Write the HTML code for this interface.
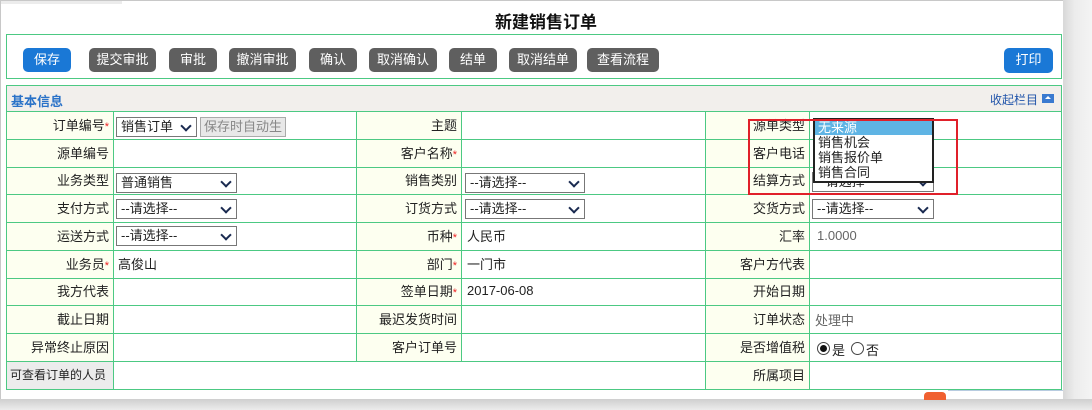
<!DOCTYPE html>
<html><head><meta charset="utf-8"><style>
*{box-sizing:border-box;margin:0;padding:0}
body{width:1092px;height:410px;overflow:hidden;background:#fff;font-family:"Liberation Sans","Noto Sans CJK SC",sans-serif;font-size:13px;color:#222;position:relative}
.abs{position:absolute}
.btn{position:absolute;top:48px;height:24px;border-radius:5px;background:#5f5f5f;color:#fff;font-size:13px;line-height:24px;text-align:center}
.blue{background:#1a78d6}
.hl{position:absolute;height:1px;background:#4cc983}
.vl{position:absolute;width:1px;background:#4cc983}
.lab{position:absolute;background:#fdfff0;text-align:right;padding-right:4px;font-size:13px;white-space:nowrap}
.val{position:absolute;padding-left:5px;font-size:13px}
.req{color:#e22;font-size:11px}
.sel{position:absolute;height:20px;border:1px solid #777;background:#fff;font-size:13px;line-height:18px;padding-left:4px}
.sel:after{content:"";position:absolute;right:6px;top:4px;width:6px;height:6px;border-right:2px solid #1a2a50;border-bottom:2px solid #1a2a50;transform:rotate(45deg)}
</style></head><body>
<div class="abs" style="left:0;top:0;width:122px;height:4px;background:#ececec"></div>
<div class="abs" style="left:0;top:0;width:1064px;height:1px;background:#c8c8c8"></div>
<div class="abs" style="left:0;top:0;width:1px;height:400px;background:#c8c8c8"></div>
<div class="abs" style="left:1063px;top:0;width:29px;height:410px;background:linear-gradient(90deg,#d8d8d8,#ececec 40%,#f4f4f4)"></div>
<div class="abs" style="left:0;top:399px;width:1092px;height:11px;background:linear-gradient(#cfcfcf,#ececec)"></div>
<div class="abs" style="left:0;top:8px;width:1092px;text-align:center;font-size:17px;font-weight:bold;color:#111">新建销售订单</div>
<div class="abs" style="left:6px;top:34px;width:1056px;height:45px;border:1px solid #4cc983"></div>
<div class="btn blue" style="left:23px;width:48px">保存</div>
<div class="btn" style="left:89px;width:67px">提交审批</div>
<div class="btn" style="left:169px;width:48px">审批</div>
<div class="btn" style="left:229px;width:67px">撤消审批</div>
<div class="btn" style="left:309px;width:48px">确认</div>
<div class="btn" style="left:369px;width:68px">取消确认</div>
<div class="btn" style="left:449px;width:48px">结单</div>
<div class="btn" style="left:509px;width:68px">取消结单</div>
<div class="btn" style="left:587px;width:72px">查看流程</div>
<div class="btn blue" style="left:1004px;width:49px;height:25px">打印</div>
<div class="abs" style="left:6px;top:85px;width:1056px;height:27px;background:#f2efec;border:1px solid #4cc983"></div>
<div class="abs" style="left:11px;top:91px;color:#2a72c8;font-weight:bold;font-size:13px">基本信息</div>
<div class="abs" style="left:990px;top:91px;color:#2255aa;font-size:12px">收起栏目</div>
<div class="abs" style="left:1042px;top:94px;width:12px;height:9px;background:#3a7ad0"><div style="margin:2px auto;width:0;height:0;border-left:3px solid transparent;border-right:3px solid transparent;border-bottom:3px solid #fff"></div></div>
<div id="g"></div>
<div class="vl" style="left:6px;top:111px;height:278px"></div>
<div class="vl" style="left:113px;top:111px;height:278px"></div>
<div class="vl" style="left:356px;top:111px;height:250px"></div>
<div class="vl" style="left:461px;top:111px;height:250px"></div>
<div class="vl" style="left:705px;top:111px;height:278px"></div>
<div class="vl" style="left:809px;top:111px;height:278px"></div>
<div class="vl" style="left:1061px;top:111px;height:278px"></div>
<script>
var ys=[111,139,167,194,222,250,278,305,333,361,389];
var L=[["订单编号",1,"主题",0,"源单类型",0],["源单编号",0,"客户名称",1,"客户电话",0],["业务类型",0,"销售类别",0,"结算方式",0],["支付方式",0,"订货方式",0,"交货方式",0],["运送方式",0,"币种",1,"汇率",0],["业务员",1,"部门",1,"客户方代表",0],["我方代表",0,"签单日期",1,"开始日期",0],["截止日期",0,"最迟发货时间",0,"订单状态",0],["异常终止原因",0,"客户订单号",0,"是否增值税",0],["",0,"",0,"所属项目",0]];
var cx=[[7,106],[357,104],[706,103]];var h="";
for(var i=0;i<10;i++){var t=ys[i]+1,hh=ys[i+1]-ys[i]-1;
for(var c=0;c<3;c++){var lb=L[i][c*2];if(i==9&&c==1)continue;
if(i==9&&c==0){h+='<div class="lab" style="left:7px;top:'+t+'px;width:106px;height:'+hh+'px;background:#ececec;text-align:left;padding-left:3px;font-size:12px;line-height:'+hh+'px">可查看订单的人员</div>';continue;}
h+='<div class="lab" style="left:'+cx[c][0]+'px;top:'+t+'px;width:'+cx[c][1]+'px;height:'+hh+'px;line-height:'+hh+'px">'+lb+(L[i][c*2+1]?'<span class="req">*</span>':'')+'</div>';}
h+='<div class="hl" style="left:6px;top:'+ys[i]+'px;width:1056px"></div>';}
h+='<div class="hl" style="left:6px;top:389px;width:1056px"></div>';
document.getElementById("g").innerHTML=h;
</script>
<div class="sel" style="left:116px;top:117px;width:81px">销售订单</div>
<div class="abs" style="left:200px;top:117px;width:86px;height:20px;border:1px solid #aaa;background:#e8e8e8;color:#888;line-height:18px;padding-left:3px;font-size:13px;overflow:hidden;white-space:nowrap">保存时自动生</div>
<div class="sel" style="left:116px;top:173px;width:121px">普通销售</div>
<div class="sel" style="left:465px;top:173px;width:120px">--请选择--</div>
<div class="sel" style="left:116px;top:199px;width:121px">--请选择--</div>
<div class="sel" style="left:465px;top:199px;width:120px">--请选择--</div>
<div class="sel" style="left:812px;top:199px;width:122px">--请选择--</div>
<div class="sel" style="left:116px;top:226px;width:121px">--请选择--</div>
<div class="sel" style="left:812px;top:172px;width:122px">--请选择--</div>
<div class="val" style="left:462px;top:226px">人民币</div>
<div class="val" style="left:812px;top:228px;color:#666">1.0000</div>
<div class="val" style="left:113px;top:254px">高俊山</div>
<div class="val" style="left:462px;top:254px">一门市</div>
<div class="val" style="left:462px;top:283px">2017-06-08</div>
<div class="val" style="left:810px;top:310px;color:#666">处理中</div>
<div class="abs" style="left:817px;top:342px;width:13px;height:13px;border:1px solid #444;border-radius:50%;background:#fff"><div style="margin:2px;width:7px;height:7px;border-radius:50%;background:#111"></div></div>
<div class="abs" style="left:832px;top:340px">是</div>
<div class="abs" style="left:851px;top:342px;width:13px;height:13px;border:1px solid #444;border-radius:50%"></div>
<div class="abs" style="left:866px;top:340px">否</div>
<div class="abs" style="left:813px;top:118px;width:121px;height:65px;border:2px solid #222;background:#fff;font-size:13px;line-height:15px">
<div style="background:#5fb4e4;color:#fff;padding-left:3px">无来源</div>
<div style="padding-left:3px">销售机会</div><div style="padding-left:3px">销售报价单</div><div style="padding-left:3px">销售合同</div></div>
<div class="abs" style="left:748px;top:119px;width:210px;height:76px;border:2px solid #e0202a"></div>
<div class="abs" style="left:924px;top:392px;width:22px;height:8px;background:#f06030;border-radius:4px 4px 0 0"></div>
<div class="abs" style="left:948px;top:390px;width:115px;height:1px;background:#b8cce0"></div>
</body></html>
